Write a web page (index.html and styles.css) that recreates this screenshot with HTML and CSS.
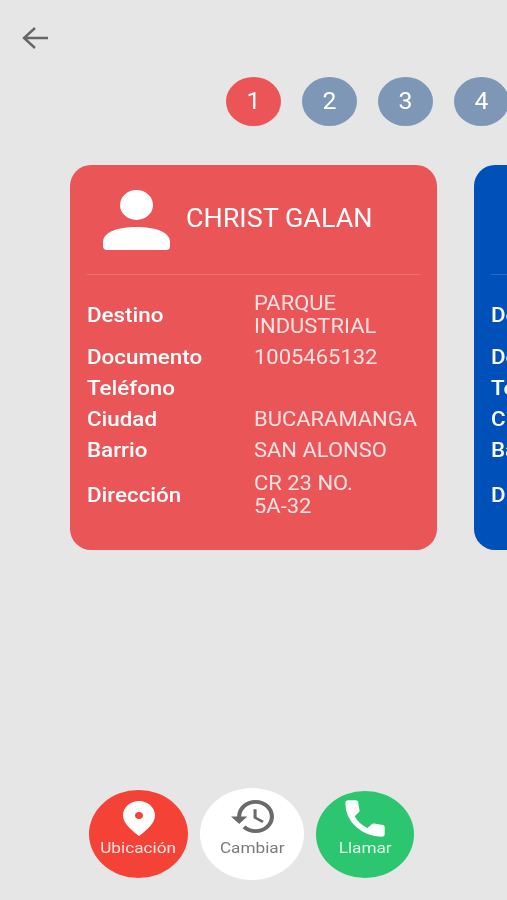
FILE: index.html
```html
<!DOCTYPE html>
<html lang="es">
<head>
<meta charset="utf-8">
<title>Paradas</title>
<link rel="stylesheet" href="styles.css">
</head>
<body>
<main class="screen">
  <header class="topbar">
    <svg class="back" viewBox="0 0 26 22" aria-hidden="true"><path d="M26 11H2M13 1 2 11l11 10"/></svg>
  </header>
  <nav class="steps">
    <span class="step step--active"><span class="digit">1</span></span>
    <span class="step"><span class="digit">2</span></span>
    <span class="step"><span class="digit">3</span></span>
    <span class="step"><span class="digit">4</span></span>
  </nav>
  <section class="cards">
    <article class="card">
      <div class="card-head">
        <svg class="avatar" viewBox="0 0 67 60" preserveAspectRatio="none" aria-hidden="true"><ellipse cx="33.5" cy="15" rx="16.5" ry="15"/><path d="M0 52C0 42 15 37 33.500 37S67 42 67 52v4q0 4-4 4H4q-4 0-4-4z"/></svg>
        <h2 class="name">CHRIST GALAN</h2>
      </div>
      <dl class="info">
        <div class="row"><dt>Destino</dt><dd>PARQUE<br>INDUSTRIAL</dd></div>
        <div class="row"><dt>Documento</dt><dd>1005465132</dd></div>
        <div class="row"><dt>Teléfono</dt><dd></dd></div>
        <div class="row"><dt>Ciudad</dt><dd>BUCARAMANGA</dd></div>
        <div class="row"><dt>Barrio</dt><dd>SAN ALONSO</dd></div>
        <div class="row row--last"><dt>Dirección</dt><dd>CR 23 NO.<br>5A-32</dd></div>
      </dl>
    </article>
    <article class="card card--blue">
      <div class="card-head"></div>
      <dl class="info">
        <div class="row row--tall"><dt>Destino</dt><dd></dd></div>
        <div class="row"><dt>Documento</dt><dd></dd></div>
        <div class="row"><dt>Teléfono</dt><dd></dd></div>
        <div class="row"><dt>Ciudad</dt><dd></dd></div>
        <div class="row"><dt>Barrio</dt><dd></dd></div>
        <div class="row row--last row--tall"><dt>Dirección</dt><dd></dd></div>
      </dl>
    </article>
  </section>
  <footer class="actions">
    <button class="action action--red" type="button">
      <svg class="pin" viewBox="0 0 32 35" preserveAspectRatio="none" aria-hidden="true"><path fill-rule="evenodd" d="M16 0C7 0 0 6.500 0 14.500 0 22 8 29 16 35c8-6 16-13 16-20.500C32 6.500 25 0 16 0zm0 11c2.500 0 4 1.500 4 3.500S18.500 18 16 18s-4-1.500-4-3.500S13.500 11 16 11z"/></svg>
      <span class="label">Ubicación</span>
    </button>
    <button class="action action--white" type="button">
      <svg class="history" viewBox="1 3 21 18" preserveAspectRatio="none" aria-hidden="true"><path d="M13 3c-4.970 0-9 4.030-9 9H1l3.890 3.890.07.14L9 12H6c0-3.870 3.130-7 7-7s7 3.130 7 7-3.130 7-7 7c-1.930 0-3.680-.79-4.940-2.060l-1.420 1.420C8.270 19.990 10.510 21 13 21c4.970 0 9-4.030 9-9s-4.030-9-9-9zm-1 5v5l4.280 2.540.72-1.210-3.500-2.080V8H12z"/></svg>
      <span class="label">Cambiar</span>
    </button>
    <button class="action action--green" type="button">
      <svg class="phone" viewBox="2.5 2.5 19 19" preserveAspectRatio="none" aria-hidden="true"><path d="M6.620 10.790c1.440 2.830 3.760 5.140 6.590 6.590l2.200-2.200c.27-.27.67-.36 1.020-.24 1.120.37 2.330.57 3.570.57.55 0 1 .45 1 1V20c0 .55-.45 1-1 1-9.390 0-17-7.610-17-17 0-.55.45-1 1-1h3.500c.55 0 1 .45 1 1 0 1.250.2 2.450.57 3.570.11.35.03.74-.25 1.020l-2.200 2.200z"/></svg>
      <span class="label">Llamar</span>
    </button>
  </footer>
</main>
</body>
</html>
```
FILE: styles.css
```css
* { box-sizing: border-box; }
html, body { margin: 0; padding: 0; }
body {
  background: #e6e6e6;
  font-family: Roboto, "Liberation Sans", sans-serif;
  overflow: hidden;
}
.screen {
  width: 507px;
  height: 900px;
  display: flex;
  flex-direction: column;
  overflow: hidden;
  filter: blur(.5px);
}
.topbar { height: 77px; padding: 27px 0 0 22px; }
.back { display: block; width: 26px; height: 22px; fill: none; stroke: #666; stroke-width: 2.4; overflow: visible; }
.steps { display: flex; gap: 21px; padding-left: 226px; height: 49px; }
.step {
  flex: none;
  width: 55px;
  height: 49px;
  border-radius: 50%;
  background: #7f97b6;
  color: #fff;
  font-size: 23px;
  line-height: 49px;
  text-align: center;
}
.step--active { background: #ec5558; }
.digit { display: inline-block; transform: scaleX(1.08); }
.cards { display: flex; gap: 37px; padding: 39px 0 0 70px; }
.card {
  flex: none;
  width: 367px;
  height: 385px;
  padding: 0 17px;
  border-radius: 21px;
  background: #ea5558;
  color: #fff;
}
.card--blue { background: #0050b9; }
.card-head {
  height: 110px;
  display: flex;
  align-items: flex-start;
  gap: 16px;
  padding: 25px 0 0 16px;
  border-bottom: 1px solid rgba(255, 255, 255, .16);
}
.avatar { flex: none; width: 67px; height: 60px; fill: #fff; }
.name {
  margin: 14px 0 0;
  font-size: 25px;
  line-height: 30px;
  font-weight: 400;
  white-space: nowrap;
  transform: scaleX(1.078);
  transform-origin: left center;
}
.info { margin: 17px 0 0; display: flex; flex-direction: column; gap: 8px; }
.row { display: flex; align-items: center; min-height: 23px; font-size: 20px; line-height: 23px; }
.row--tall { min-height: 46px; }
.row--last { margin-top: 2px; }
dt {
  flex: none;
  width: 167px;
  font-weight: 500;
  white-space: nowrap;
  transform: scaleX(1.118);
  transform-origin: left center;
}
dd {
  margin: 0;
  font-weight: 400;
  white-space: nowrap;
  color: #fbe3e3;
  transform: scaleX(1.098);
  transform-origin: left center;
}
.actions {
  margin-top: auto;
  height: 132px;
  display: flex;
  align-items: center;
  padding-left: 89px;
}
.action {
  flex: none;
  display: flex;
  flex-direction: column;
  align-items: center;
  justify-content: flex-start;
  border: 0;
  border-radius: 50%;
  padding: 0;
  font-family: inherit;
  font-size: 15px;
  line-height: 18px;
}
.label { display: block; transform: scaleX(1.145); }
.action--red { width: 99px; height: 88px; padding-top: 11px; margin-right: 12px; background: #f44336; color: #fde4e2; gap: 3px; }
.action--white { width: 104px; height: 92px; padding-top: 12px; margin-right: 12px; background: #fff; color: #7a7a7a; gap: 6px; }
.action--green { width: 98px; height: 87px; padding-top: 9px; background: #2bc66f; color: #e3f8ec; gap: 4px; }
.pin { width: 32px; height: 35px; fill: #fff; }
.history { width: 43px; height: 33px; fill: #6a6a6a; }
.phone { width: 40px; height: 37px; margin-bottom: -2px; fill: #fff; stroke: #fff; stroke-width: .7; stroke-linejoin: round; }
```
